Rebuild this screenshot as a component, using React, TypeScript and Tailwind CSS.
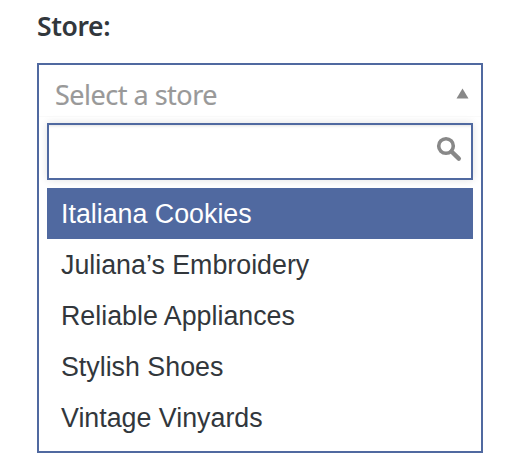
const stores = [
    "Italiana Cookies",
    "Juliana’s Embroidery",
    "Reliable Appliances",
    "Stylish Shoes",
    "Vintage Vinyards",
];

export default function App() {
    return (
        <div className="w-full h-[475px] bg-white pl-[37px] pt-2 text-[#32373c]">
            <label className="block h-9 leading-9 text-[26.5px] tracking-[-0.4px] font-semibold font-['Noto_Sans',sans-serif]">Store:</label>
            <div className="mt-[19px] w-[446px] h-[390px] border-2 border-[#5069a0] flex flex-col">
                <div className="h-[52px] pl-4 pr-3 pt-2 flex justify-between items-center border-b border-[#fafafa]">
                    <span className="text-[27px] leading-9 tracking-[-0.5px] text-[#999] [-webkit-text-stroke:0.15px_#999] font-['Noto_Sans',sans-serif]">Select a store</span>
                    <svg width="13" height="11" viewBox="0 0 13 11" className="mb-0.5">
                        <path d="M6.5 0.5L12.5 10.5H0.5Z" fill="#888" />
                    </svg>
                </div>
                <div className="mt-1.5 mx-2 h-[57px] shrink-0 border-2 border-[#5069a0] shadow-[0_0_8px_rgba(0,0,0,0.12),inset_0_3px_3px_-2px_rgba(0,0,0,0.12)] flex items-center">
                    <input type="text" className="flex-1 h-full outline-none px-3 text-[26px] font-['Liberation_Sans',sans-serif]" />
                    <svg width="26" height="26" viewBox="0 0 26 26" className="mr-[9px] mb-[5px]" fill="none" stroke="#888">
                        <circle cx="10" cy="10" r="7.3" strokeWidth="3.6" />
                        <path d="M15.5 15.5L22.8 22.6" strokeWidth="4.4" strokeLinecap="round" />
                    </svg>
                </div>
                <ul className="mt-2 mx-2 font-['Liberation_Sans',sans-serif] text-[26.8px] leading-[51px]">
                    {stores.map((store, i) => (
                        <li key={store} className={i === 0 ? "h-[51px] pl-3.5 pt-px bg-[#5069a0] text-white" : "h-[51px] pl-3.5 pt-px leading-[50px]"}>
                            {store}
                        </li>
                    ))}
                </ul>
            </div>
        </div>
    );
}
